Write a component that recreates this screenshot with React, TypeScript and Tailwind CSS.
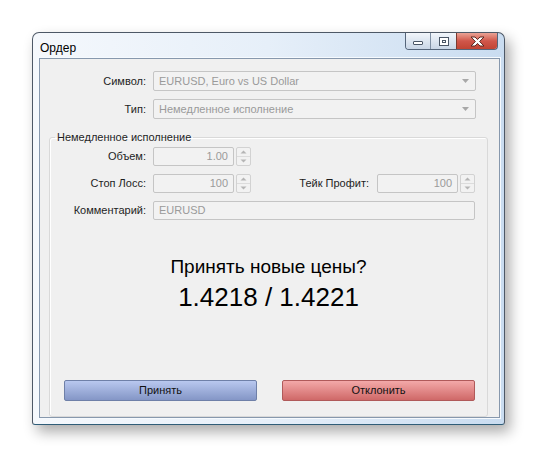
import React from "react";

const font = { fontFamily: '"Liberation Sans", Arial, sans-serif' };

function CaptionButtons() {
  return (
    <div className="flex h-[17px] overflow-hidden rounded-b-[4px] border border-t-0 border-[#55657a]">
      <div className="flex w-[24px] items-end justify-center bg-gradient-to-b from-[#f2f6fb] to-[#c9d6e6] pb-[4px]">
        <div className="h-[4px] w-[10px] rounded-[1px] border border-[#4a5666] bg-white" />
      </div>
      <div className="flex w-[26px] items-center justify-center border-l border-[#7f8fa3] bg-gradient-to-b from-[#f2f6fb] to-[#c9d6e6]">
        <div className="flex h-[9px] w-[10px] items-center justify-center border border-[#4a5666] bg-white">
          <div className="h-[3px] w-[4px] border border-[#4a5666]" />
        </div>
      </div>
      <div className="flex w-[41px] items-center justify-center border-l border-[#7a3a30] bg-gradient-to-b from-[#e9a295] via-[#d0564a] to-[#c14433]">
        <svg width="15" height="11" viewBox="0 0 15 11">
          <path
            d="M1 1h4l2.5 2.6L10 1h4L9.6 5.5 14 10h-4L7.5 7.4 5 10H1l4.4-4.5z"
            fill="#fff"
            stroke="#5b2a22"
            strokeWidth="1"
            strokeLinejoin="round"
          />
        </svg>
      </div>
    </div>
  );
}

function Combo({ value }: { value: string }) {
  return (
    <div className="flex h-[20px] flex-1 items-center rounded-[2px] border border-[#c5c5c5] bg-[#f2f2f2]">
      <span className="flex-1 pl-[5px] text-[#9a9a9a]">{value}</span>
      <svg width="18" height="6" viewBox="0 0 18 6" className="mr-[1px]">
        <path d="M6 1h7l-3.5 4z" fill="#a8a8a8" />
      </svg>
    </div>
  );
}

function Spinner() {
  return (
    <div className="flex h-[19px] w-[15px] flex-col rounded-[2px] border border-[#d2d2d2] bg-[#f2f2f2]">
      <div className="flex flex-1 items-center justify-center border-b border-[#dcdcdc]">
        <svg width="7" height="4" viewBox="0 0 7 4">
          <path d="M0.5 3.5h6L3.5 0.5z" fill="#b5b5b5" />
        </svg>
      </div>
      <div className="flex flex-1 items-center justify-center">
        <svg width="7" height="4" viewBox="0 0 7 4">
          <path d="M0.5 0.5h6L3.5 3.5z" fill="#b5b5b5" />
        </svg>
      </div>
    </div>
  );
}

function NumField({ value }: { value: string }) {
  return (
    <div className="flex items-center gap-[2px]">
      <div className="flex h-[19px] w-[81px] items-center justify-end rounded-[2px] border border-[#c5c5c5] bg-[#f2f2f2] pr-[5px] text-[#9a9a9a]">
        {value}
      </div>
      <Spinner />
    </div>
  );
}

export default function App() {
  return (
    <div
      className="h-[458px] w-[538px] overflow-hidden bg-white pl-[32px] pt-[32px] text-[11px] text-[#1e1e1e]"
      style={font}
    >
      <div className="flex h-[393px] w-[473px] flex-col rounded-t-[7px] rounded-b-[3px] border border-[#4d5866] border-b-[#2f5d78] bg-gradient-to-r from-[#f5f8fc] via-[#e6eff9] to-[#c9dcf0] pb-[6px] pl-[6px] pr-[4px] shadow-[5px_7px_14px_rgba(0,0,0,0.33)]">
        {/* title bar */}
        <div className="flex h-[25px] items-start justify-between">
          <span className="pl-[1px] pt-[6px] text-[12px] text-black">Ордер</span>
          <div className="mr-[2px]">
            <CaptionButtons />
          </div>
        </div>

        {/* client area */}
        <div className="flex flex-1 flex-col border border-[#8798ad] bg-[#f0f0f0] pl-[9px] pr-[11px] pt-[12px] shadow-[0_0_0_1px_#f6fafe]">
          <div className="flex flex-col gap-[8px] pr-[12px]">
            <div className="flex items-center gap-[7px]">
              <span className="w-[97px] text-right">Символ:</span>
              <Combo value="EURUSD, Euro vs US Dollar" />
            </div>
            <div className="flex items-center gap-[7px]">
              <span className="w-[97px] text-right">Тип:</span>
              <Combo value="Немедленное исполнение" />
            </div>
          </div>

          <fieldset className="mt-[12px] flex flex-1 flex-col rounded-[3px] border border-[#d9d9d9] pb-[15px] pt-[3px] shadow-[inset_1px_1px_0_#ffffff]">
            <legend className="ml-[5px] px-[2px] leading-[13px]">Немедленное исполнение</legend>

            <div className="flex flex-col gap-[8px] pr-[12px]">
              <div className="flex items-center gap-[7px]">
                <span className="w-[96px] text-right">Объем:</span>
                <NumField value="1.00" />
              </div>
              <div className="flex items-center gap-[7px]">
                <span className="w-[96px] text-right">Стоп Лосс:</span>
                <NumField value="100" />
                <span className="flex-1 pr-[1px] text-right">Тейк Профит:</span>
                <NumField value="100" />
              </div>
              <div className="flex items-center gap-[7px]">
                <span className="w-[96px] text-right">Комментарий:</span>
                <div className="flex h-[19px] flex-1 items-center rounded-[2px] border border-[#c5c5c5] bg-[#f2f2f2] pl-[5px] text-[#9a9a9a]">
                  EURUSD
                </div>
              </div>
            </div>

            <div className="mt-[35px] flex flex-col items-center text-black">
              <span className="text-[19px] leading-[23px]">Принять новые цены?</span>
              <span className="mt-[4px] text-[26px] leading-[30px]">1.4218 / 1.4221</span>
            </div>

            <div className="mt-auto flex gap-[25px] pl-[14px] pr-[12px]">
              <button className="h-[21px] flex-1 rounded-[2px] border border-[#6f80a8] bg-gradient-to-b from-[#b9c8ef] to-[#8496c6] text-[#111]">
                Принять
              </button>
              <button className="h-[21px] flex-1 rounded-[2px] border border-[#b05a5a] bg-gradient-to-b from-[#f3a9a9] to-[#cf6868] text-[#111]">
                Отклонить
              </button>
            </div>
          </fieldset>
        </div>
      </div>
    </div>
  );
}
